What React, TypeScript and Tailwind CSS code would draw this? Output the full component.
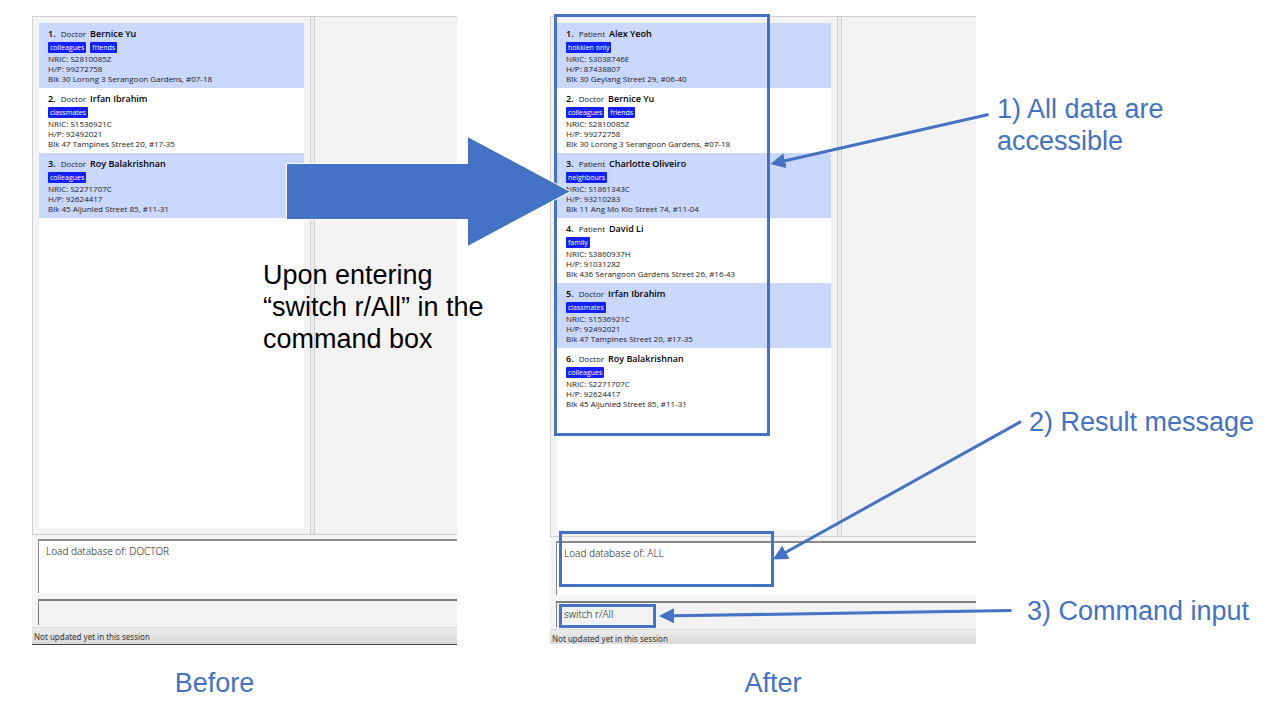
import type { ReactNode } from "react";

type Person = {
  role: "Doctor" | "Patient";
  name: string;
  tags: string[];
  nric: string;
  phone: string;
  address: string;
};

const alex: Person = { role: "Patient", name: "Alex Yeoh", tags: ["hokkien only"], nric: "S3038746E", phone: "87438807", address: "Blk 30 Geylang Street 29, #06-40" };
const bernice: Person = { role: "Doctor", name: "Bernice Yu", tags: ["colleagues", "friends"], nric: "S2810085Z", phone: "99272758", address: "Blk 30 Lorong 3 Serangoon Gardens, #07-18" };
const charlotte: Person = { role: "Patient", name: "Charlotte Oliveiro", tags: ["neighbours"], nric: "S1861343C", phone: "93210283", address: "Blk 11 Ang Mo Kio Street 74, #11-04" };
const david: Person = { role: "Patient", name: "David Li", tags: ["family"], nric: "S3860937H", phone: "91031282", address: "Blk 436 Serangoon Gardens Street 26, #16-43" };
const irfan: Person = { role: "Doctor", name: "Irfan Ibrahim", tags: ["classmates"], nric: "S1536921C", phone: "92492021", address: "Blk 47 Tampines Street 20, #17-35" };
const roy: Person = { role: "Doctor", name: "Roy Balakrishnan", tags: ["colleagues"], nric: "S2271707C", phone: "92624417", address: "Blk 45 Aljunied Street 85, #11-31" };

function PersonCard({ person, index }: { person: Person; index: number }) {
  return (
    <li className="pt-[3px] pr-2 pb-1 pl-[9px] text-[8px] leading-[10px] text-[#222] odd:bg-[#cad7ff]">
      <h3 className="flex h-4 items-baseline text-[9px] leading-4 font-semibold text-black">
        <span>{index}.</span>
        <span className="mr-1 ml-[5px] text-[8px] font-normal text-[#222]">{person.role}</span>
        <span>{person.name}</span>
      </h3>
      <div className="flex h-3 items-start gap-1">
        {person.tags.map((tag) => (
          <span key={tag} className="rounded-[1px] bg-[#1420fc] px-[2px] text-[7px] leading-[11px] text-white">
            {tag}
          </span>
        ))}
      </div>
      <p>NRIC: {person.nric}</p>
      <p>H/P: {person.phone}</p>
      <p>{person.address}</p>
    </li>
  );
}

type WindowProps = {
  people: Person[];
  result: string;
  command: string;
  paneClass: string;
  listClass: string;
  statusClass: string;
};

function AppWindow({ people, result, command, paneClass, listClass, statusClass }: WindowProps) {
  return (
    <section className="flex flex-col bg-[#f4f4f4] font-['Open_Sans','Noto_Sans',sans-serif]">
      <div className={`flex border-t border-b border-l border-[#d0d0d0] bg-[#f3f3f3] ${paneClass}`}>
        <ol className={`my-[6px] ml-[6px] bg-white ${listClass}`}>
          {people.map((person, i) => (
            <PersonCard key={person.name} person={person} index={i + 1} />
          ))}
        </ol>
        <div className="ml-[6px] w-[5px] border-x border-[#cfcfcf] bg-[#ececec]" />
      </div>
      <output className="mt-1 ml-[6px] block h-[54px] border-t-2 border-l border-[#8a8a8a] bg-white pt-[2px] pl-[7px] font-['Noto_Sans',sans-serif] text-[10px] leading-4 font-light text-[#222]">
        {result}
      </output>
      <input
        type="text"
        aria-label="Command"
        defaultValue={command}
        className="mt-[6px] ml-[6px] h-[26px] rounded-none border-t-2 border-l border-[#7c7c7c] bg-[#f2f2f2] pb-[2px] pl-[7px] font-['Noto_Sans',sans-serif] text-[10px] leading-4 font-light text-[#222] outline-none"
      />
      <footer className={`mt-[2px] border-t border-[#dcdcdc] bg-linear-to-b from-[#ececec] to-[#d9d9d9] pl-[2px] font-['Noto_Sans',sans-serif] text-[8px] text-[#333] ${statusClass}`}>
        Not updated yet in this session
      </footer>
    </section>
  );
}

function Callout({ className, children }: { className: string; children: ReactNode }) {
  return <p className={className}>{children}</p>;
}

export default function App() {
  return (
    <main className="relative flex min-h-screen min-w-[1280px] bg-white pt-4 pl-8 font-['Liberation_Sans',Arial,sans-serif] text-[27px] leading-8 text-[#4472c4]">
      <figure className="w-[425px] shrink-0">
        <AppWindow
          people={[bernice, irfan, roy]}
          result="Load database of: DOCTOR"
          command=""
          paneClass="h-[519px]"
          listClass="w-[265px]"
          statusClass="h-[18px] border-b border-b-[#444] leading-[18px]"
        />
        <figcaption className="mt-[22px] pr-[60px] text-center">Before</figcaption>
      </figure>

      <figure className="ml-[93px] w-[426px] shrink-0">
        <AppWindow
          people={[alex, bernice, charlotte, david, irfan, roy]}
          result="Load database of: ALL"
          command="switch r/All"
          paneClass="h-[521px]"
          listClass="w-[274px]"
          statusClass="h-[15px] leading-[18px]"
        />
        <figcaption className="mt-[23px] pl-5 text-center">After</figcaption>
      </figure>

      <aside className="flex flex-1 flex-col pt-[77px] pl-[21px]">
        <Callout className="max-w-[200px]">1) All data are accessible</Callout>
        <Callout className="mt-[249px] pl-8">2) Result message</Callout>
        <Callout className="mt-[157px] pl-[30px]">3) Command input</Callout>
      </aside>

      <p className="absolute top-[259px] left-[263px] w-[230px] text-black">
        Upon entering “switch r/All” in the command box
      </p>

      <svg className="pointer-events-none absolute top-0 left-0" width="1280" height="720" viewBox="0 0 1280 720" fill="none" aria-hidden="true">
        <defs>
          <marker id="head" markerUnits="userSpaceOnUse" markerWidth="15" markerHeight="15" refX="1" refY="7.5" orient="auto">
            <path d="M0 0L15 7.5L0 15Z" fill="#4472c4" />
          </marker>
        </defs>
        <g stroke="#4472c4" strokeWidth="3">
          <rect x="555.5" y="15.5" width="213" height="419" />
          <rect x="560.5" y="532.5" width="212" height="53" />
          <rect x="560.5" y="605.5" width="94" height="21" />
          <path d="M988.5 114.5L784 161" markerEnd="url(#head)" />
          <path d="M1021 421.5L785 552.8" markerEnd="url(#head)" />
          <path d="M1011.5 610.5L673 615.8" markerEnd="url(#head)" />
        </g>
        <path d="M286.5 163.5H467.5V136.5L570.5 191.5L467.5 246.5V219.5H286.5Z" fill="#4472c4" stroke="#fff" />
      </svg>
    </main>
  );
}
